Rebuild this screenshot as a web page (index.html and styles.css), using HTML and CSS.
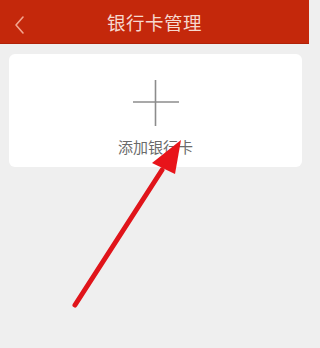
FILE: index.html
```html
<!DOCTYPE html>
<html lang="zh">
<head>
<meta charset="utf-8">
<title>银行卡管理</title>
<link rel="stylesheet" href="styles.css">
</head>
<body>
<div class="page">
  <header class="topbar">
    <svg class="back" width="14" height="22" viewBox="0 0 14 22">
      <polyline points="10,3 3,11 10,19" fill="none" stroke="#f2a58f" stroke-width="1.6" stroke-linecap="round" stroke-linejoin="round"/>
    </svg>
    <h1 class="title">银行卡管理</h1>
  </header>
  <main class="content">
    <div class="card">
      <svg class="plus" width="46" height="46" viewBox="0 0 46 46">
        <line x1="0" y1="22" x2="46" y2="22" stroke="#8c8c8c" stroke-width="1.6"/>
        <line x1="22.5" y1="0" x2="22.5" y2="46" stroke="#8c8c8c" stroke-width="1.6"/>
      </svg>
      <div class="add-text">添加银行卡</div>
    </div>
  </main>
  <svg class="arrow" width="309" height="348" viewBox="0 0 309 348">
    <line x1="75" y1="305" x2="162" y2="170" stroke="#e0141a" stroke-width="5" stroke-linecap="round"/>
    <polygon points="181,140 152,163 175,174" fill="#e8141a"/>
  </svg>
</div>
</body>
</html>
```
FILE: styles.css
```css
html, body {
  margin: 0;
  padding: 0;
}
body {
  background: #efefef;
  font-family: "Noto Sans CJK SC", "Noto Sans", sans-serif;
}
.page {
  position: relative;
  width: 309px;
  height: 348px;
  overflow: hidden;
  background: #efefef;
}
.topbar {
  height: 44px;
  background: #c4280b;
  display: flex;
  align-items: center;
  justify-content: center;
  position: relative;
  border-bottom: 1px solid #b02208;
  box-sizing: border-box;
}
.back {
  position: absolute;
  left: 13px;
  top: 14px;
}
.title {
  margin: 0;
  font-size: 18.5px;
  font-weight: normal;
  color: #f6d9cf;
  letter-spacing: 0.5px;
}
.content {
  padding: 10px 7px 0 9px;
}
.card {
  background: #ffffff;
  border-radius: 6px;
  height: 113px;
  display: flex;
  flex-direction: column;
  align-items: center;
  padding-top: 26px;
  box-sizing: border-box;
}
.plus {
  display: block;
}
.add-text {
  margin-top: 11px;
  font-size: 15px;
  line-height: 20px;
  color: #6b6b6b;
}
.arrow {
  position: absolute;
  left: 0;
  top: 0;
}
```
